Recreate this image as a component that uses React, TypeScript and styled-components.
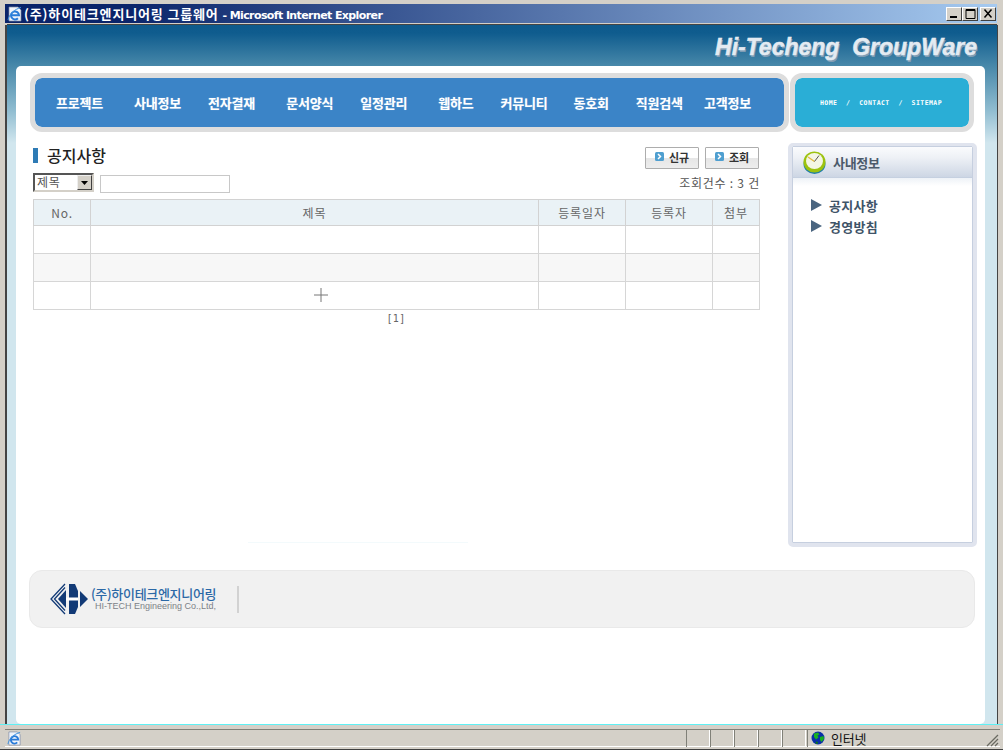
import React from "react";
import styled, { createGlobalStyle } from "styled-components";

const KR = `"Noto Sans CJK KR", "Liberation Sans", sans-serif`;

const Global = createGlobalStyle`
  html, body { margin: 0; padding: 0; background: #fff; }
  body { font-family: ${KR}; }
  * { box-sizing: border-box; }
`;

const Win = styled.div`
  width: 1003px;
  height: 752px;
  overflow: hidden;
  display: flex;
  flex-direction: column;
  background: #fff;
`;
const Chrome = styled.div`
  height: 750px;
  display: flex;
  flex-direction: column;
  background: #d4d0c8;
  border-bottom: 1px solid #404040;
`;
const TitleBar = styled.div`
  height: 19px;
  margin: 4px 6px 0 5px;
  flex: none;
  display: flex;
  align-items: center;
  padding-left: 2px;
  background: linear-gradient(90deg, #0a246a 0%, #0a246a 12%, #a6caf0 100%);
`;
const TitleText = styled.div`
  margin-left: 1px;
  color: #fff;
  font: 700 13px ${KR};
  letter-spacing: 0.85px;
  white-space: nowrap;
`;
const TitleLatin = styled.span`
  font: 700 11px "DejaVu Sans", "Liberation Sans", sans-serif;
  letter-spacing: -0.6px;
`;
const WinButtons = styled.div`
  margin-left: auto;
  margin-right: 1px;
  display: flex;
`;
const WinButton = styled.div<{ $gap?: number }>`
  width: 16px;
  height: 14px;
  margin-left: ${(p) => p.$gap ?? 0}px;
  background: #d4d0c8;
  border: 1px solid;
  border-color: #fff #404040 #404040 #fff;
  display: flex;
  align-items: center;
  justify-content: center;
`;
const Client = styled.div`
  height: 699px;
  flex: none;
  margin: 2px 6px 0 7px;
  box-shadow: -2px 0 0 #444, 1px 0 0 #444, 0 -1px 0 #444;
  padding: 41px 12px 0 9px;
  background: linear-gradient(
    180deg,
    #0e5a8c 0,
    #0f5c8e 8px,
    #4687a9 40px,
    #8fbcd0 85px,
    #d1e6ee 118px
  );
`;
const Card = styled.div`
  height: 658px;
  background: #fff;
  border-radius: 5px;
  padding: 7px 0 0 14px;
  position: relative;
`;
const Brand = styled.div`
  position: absolute;
  right: 8px;
  top: -32px;
  color: #e4ebf2;
  font: italic 700 23px "Liberation Sans", sans-serif;
  -webkit-text-stroke: 0.5px #e4ebf2;
  white-space: pre;
  text-shadow: 1px 2px 0 #7f9db5;
`;
const NavRow = styled.div`
  display: flex;
  gap: 1px;
  height: 59px;
`;
const NavFrame = styled.div<{ $w: number; $bg: string }>`
  width: ${(p) => p.$w}px;
  height: 59px;
  border: 5px solid #dddddd;
  border-radius: 12px;
  background: ${(p) => p.$bg};
  background-clip: padding-box;
  display: flex;
  align-items: center;
  justify-content: ${(p) => (p.$w < 300 ? "center" : "flex-start")};
  padding-left: ${(p) => (p.$w < 300 ? 0 : 21)}px;
`;
const NavItem = styled.div<{ $gap: number }>`
  margin-left: ${(p) => p.$gap}px;
  color: #fff;
  font: 700 13px ${KR};
  letter-spacing: -0.2px;
  white-space: nowrap;
  text-shadow: 0 0 1px rgba(255, 255, 255, 0.4);
`;
const SubNav = styled.div`
  color: #fff;
  font: 700 6.5px "DejaVu Sans Mono", monospace;
  letter-spacing: 0.45px;
  white-space: pre;
  margin-left: -2px;
`;
const Main = styled.div`
  display: flex;
  margin-top: 11px;
  height: 404px;
  padding-left: 3px;
`;
const Left = styled.div`
  width: 726px;
  flex: none;
  margin-right: 29px;
  display: flex;
  flex-direction: column;
`;
const HeadRow = styled.div`
  display: flex;
  align-items: center;
  height: 21px;
  margin-top: 4px;
`;
const Marker = styled.div`
  width: 5px;
  height: 15px;
  margin-top: -5px;
  background: #2e7bb5;
  margin-right: 9px;
`;
const PageTitle = styled.div`
  font: 500 16px ${KR};
  color: #222;
  white-space: nowrap;
  margin-top: -6px;
`;
const Buttons = styled.div`
  margin-left: auto;
  display: flex;
  gap: 6px;
`;
const Btn = styled.div`
  width: 54px;
  height: 22px;
  border: 1px solid #adadad;
  border-radius: 1px;
  background: linear-gradient(180deg, #fff 0, #fff 50%, #e6e6e6 51%, #ededed 100%);
  display: flex;
  align-items: center;
  justify-content: center;
  gap: 5px;
  color: #333;
  font: 700 11px ${KR};
  letter-spacing: -0.2px;
  padding-bottom: 2px;
`;
const FilterRow = styled.div`
  display: flex;
  align-items: flex-start;
  height: 26px;
  margin-top: 5px;
  position: relative;
`;
const FakeSelect = styled.div`
  width: 61px;
  height: 19px;
  border: 2px solid;
  border-color: #555 #d4d0c8 #d4d0c8 #555;
  background: #fff;
  display: flex;
  color: #555;
  font: 400 12px/13px ${KR};
  padding-left: 2px;
  letter-spacing: 0.7px;
`;
const SelectArrow = styled.div`
  margin-left: auto;
  width: 15px;
  height: 15px;
  background: #d4d0c8;
  border: 1px solid;
  border-color: #eee #404040 #404040 #eee;
  display: flex;
  align-items: center;
  justify-content: center;
`;
const Input = styled.div`
  width: 130px;
  height: 18px;
  margin: 2px 0 0 6px;
  border: 1px solid #c8c8c8;
  background: #fff;
`;
const Count = styled.div`
  margin-left: auto;
  margin-right: -1px;
  margin-top: 2px;
  color: #555;
  font: 400 12px/16px ${KR};
  white-space: nowrap;
  letter-spacing: 0.75px;
`;
const Table = styled.table`
  width: 726px;
  border-collapse: collapse;
  table-layout: fixed;
`;
const Th = styled.th<{ $w: number }>`
  width: ${(p) => p.$w}px;
  height: 26px;
  padding: 0;
  border: 1px solid #d2d2d2;
  background: #eaf2f6;
  color: #666;
  font: 400 12px ${KR};
  letter-spacing: 0.85px;
`;
const Td = styled.td<{ $alt?: boolean }>`
  height: 28px;
  padding: 0;
  border: 1px solid #d6d6d6;
  background: ${(p) => (p.$alt ? "#f7f7f7" : "#fff")};
`;
const CursorCell = styled(Td)`
  position: relative;
`;
const Cursor = styled.svg`
  position: absolute;
  left: 223px;
  top: 6px;
`;
const Paging = styled.div`
  text-align: center;
  color: #666;
  font: 400 10px/18px "DejaVu Sans Mono", monospace;
  letter-spacing: 0.3px;
`;
const Faint = styled.div`
  width: 220px;
  height: 1px;
  margin: auto 0 4px 215px;
  background: #f3fafc;
`;
const Panel = styled.div`
  width: 189px;
  height: 404px;
  flex: none;
  border: 4px solid #e0e4ee;
  border-top-width: 3px;
  border-radius: 5px;
  background: #fff;
  box-shadow: inset 0 0 0 1px #c6cfdf;
  display: flex;
  flex-direction: column;
`;
const PanelHead = styled.div`
  height: 31px;
  flex: none;
  margin: 1px 1px 0;
  border-bottom: 1px solid #c5d0e0;
  border-radius: 3px 3px 0 0;
  background: linear-gradient(180deg, #fafbfd 0, #eef1f6 35%, #cdd6e4 100%);
  display: flex;
  align-items: center;
  padding-left: 10px;
  gap: 7px;
`;
const PanelTitle = styled.div`
  color: #4b5a6b;
  font: 700 13px ${KR};
  letter-spacing: -0.3px;
`;
const PanelFade = styled.div`
  height: 8px;
  margin: 0 1px;
  flex: none;
  background: linear-gradient(180deg, #eef2f7 0, #fff 100%);
`;
const PanelList = styled.div`
  padding: 10px 0 0 19px;
  display: flex;
  flex-direction: column;
  gap: 3px;
`;
const PanelItem = styled.div`
  display: flex;
  align-items: center;
  gap: 7px;
  height: 18px;
  color: #3f5468;
  font: 700 13px ${KR};
  letter-spacing: 0.3px;
`;
const Tri = styled.svg`
  flex: none;
`;
const Footer = styled.div`
  margin: 23px 0 0 -1px;
  width: 946px;
  height: 58px;
  background: #f1f1f1;
  border: 1px solid #e9e9e9;
  border-radius: 13px;
  display: flex;
  align-items: center;
  padding-left: 20px;
`;
const Brandline = styled.div`
  display: flex;
  flex-direction: column;
  margin-left: 3px;
  margin-top: -1px;
`;
const CoName = styled.div`
  color: #2b68a6;
  font: 500 13px/15px ${KR};
  letter-spacing: -0.3px;
  white-space: nowrap;
`;
const CoSub = styled.div`
  color: #7d8288;
  font: 400 9px/11px "Liberation Sans", sans-serif;
  margin-left: 4px;
  white-space: nowrap;
`;
const FootDivider = styled.div`
  width: 2px;
  height: 27px;
  background: #d2d2d2;
  margin-left: 21px;
`;
const Cyan = styled.div`
  height: 1px;
  flex: none;
  background: #5ff0f4;
`;
const StatusBar = styled.div`
  flex: 1;
  margin: 0 3px 0 5px;
  padding-top: 4px;
  display: flex;
  flex-direction: column;
`;
const StatusInner = styled.div`
  height: 18px;
  border-top: 1px solid #808078;
  border-bottom: 1px solid #fff;
  display: flex;
  align-items: center;
  position: relative;
  padding-left: 2px;
`;
const StatusCell = styled.div`
  width: 24px;
  height: 17px;
  border-left: 1px solid #808078;
  border-right: 1px solid #fff;
`;
const StatusCells = styled.div`
  margin-left: auto;
  display: flex;
`;
const Zone = styled.div`
  width: 193px;
  height: 17px;
  margin-left: 1px;
  display: flex;
  align-items: center;
  gap: 6px;
  padding-left: 3px;
  border-left: 1px solid #808078;
  font: 400 13px ${KR};
  letter-spacing: -0.2px;
  color: #111;
  position: relative;
`;
const Grip = styled.svg`
  position: absolute;
  right: 1px;
  bottom: 0;
`;

const IE = ({ s = 16 }: { s?: number }) => (
  <svg width={s} height={s} viewBox="0 0 16 16">
    <path d="M2 1h9l3 3v11H2z" fill="#f0f4fb" stroke="#7a88a4" strokeWidth="0.7" />
    <path d="M4 9.200h8a4 4 0 1 0-1.100 3" fill="none" stroke="#2a7bd8" strokeWidth="2" />
    <path d="M1 14C2 8 8 3 14 1.500" fill="none" stroke="#3a90e0" strokeWidth="1" />
  </svg>
);
const Globe = () => (
  <svg width="14" height="14" viewBox="0 0 14 14">
    <circle cx="7" cy="7" r="6.500" fill="#0a2fa8" />
    <path d="M3 2.500 7 1.500l1.500 2-2 1 1 2-2.500 2-2-2.500zM9 6l3.500-1 .5 3-2.500 3-1.500-2z" fill="#18b020" />
    <path d="M5 10.500l2 .5-.5 2-2-.5z" fill="#0d7a18" />
  </svg>
);
const BtnIcon = () => (
  <svg width="9" height="9" viewBox="0 0 9 9">
    <rect width="9" height="9" rx="1.500" fill="#4f9fd0" />
    <path d="M3 2l2.500 2.500L3 7" stroke="#fff" strokeWidth="1.500" fill="none" />
  </svg>
);
const Clock = () => (
  <svg width="23" height="23" viewBox="0 0 23 23">
    <ellipse cx="11.500" cy="13" rx="11" ry="10" fill="#1f7ea8" />
    <ellipse cx="11.500" cy="11" rx="11" ry="10.500" fill="#9cc20e" />
    <ellipse cx="11.500" cy="10" rx="8.500" ry="8" fill="#f4f6e4" />
    <path d="M5 6l6.500 4.500" stroke="#e2b93a" strokeWidth="1.300" fill="none" />
    <path d="M11.500 10.500 16 4.500" stroke="#555" strokeWidth="1" fill="none" />
  </svg>
);
const Logo = () => (
  <svg width="38" height="32" viewBox="0 0 38 32">
    <g fill="none" stroke="#123a76" strokeWidth="1.300">
      <path d="M15 1 1 16l14 15" />
      <path d="M15 4.500 4.500 16 15 27.500" />
    </g>
    <path d="M8 16 16 7v18z" fill="#123a76" />
    <path d="M19 1h6l3 7v16l-3 7h-6z" fill="#123a76" />
    <rect x="16" y="14.500" width="12" height="3" fill="#fff" />
    <path d="M30 8l8 8-8 8z" fill="#123a76" />
  </svg>
);

const NAV: [string, number][] = [
  ["프로젝트", 0],
  ["사내정보", 31],
  ["전자결재", 27],
  ["문서양식", 31],
  ["일정관리", 27],
  ["웹하드", 31],
  ["커뮤니티", 27],
  ["동호회", 26],
  ["직원검색", 27],
  ["고객정보", 21],
];

export default function App() {
  return (
    <Win>
      <Global />
      <Chrome>
        <TitleBar>
          <IE />
          <TitleText>
            (주)하이테크엔지니어링 그룹웨어 <TitleLatin>- Microsoft Internet Explorer</TitleLatin>
          </TitleText>
          <WinButtons>
            <WinButton>
              <svg width="10" height="10" viewBox="0 0 10 10">
                <rect x="1" y="7" width="7" height="2" fill="#000" />
              </svg>
            </WinButton>
            <WinButton>
              <svg width="11" height="10" viewBox="0 0 11 10">
                <path d="M1 1.500h9M1 .5h9v9H1z" fill="none" stroke="#000" />
              </svg>
            </WinButton>
            <WinButton $gap={2}>
              <svg width="10" height="9" viewBox="0 0 10 9">
                <path d="M1.500 .5l7 8M8.500 .5l-7 8" stroke="#000" strokeWidth="1.500" />
              </svg>
            </WinButton>
          </WinButtons>
        </TitleBar>
        <Client>
          <Card>
            <Brand>{"Hi-Techeng  GroupWare"}</Brand>
            <NavRow>
              <NavFrame $w={759} $bg="#3b84c7">
                {NAV.map(([n, g]) => (
                  <NavItem key={n} $gap={g}>
                    {n}
                  </NavItem>
                ))}
              </NavFrame>
              <NavFrame $w={184} $bg="#2aaed6">
                <SubNav>{"HOME  /  CONTACT  /  SITEMAP"}</SubNav>
              </NavFrame>
            </NavRow>
            <Main>
              <Left>
                <HeadRow>
                  <Marker />
                  <PageTitle>공지사항</PageTitle>
                  <Buttons>
                    <Btn>
                      <BtnIcon />
                      신규
                    </Btn>
                    <Btn>
                      <BtnIcon />
                      조회
                    </Btn>
                  </Buttons>
                </HeadRow>
                <FilterRow>
                  <FakeSelect>
                    제목
                    <SelectArrow>
                      <svg width="7" height="4" viewBox="0 0 7 4">
                        <path d="M0 0h7L3.500 4z" fill="#000" />
                      </svg>
                    </SelectArrow>
                  </FakeSelect>
                  <Input />
                  <Count>조회건수 : 3 건</Count>
                </FilterRow>
                <Table>
                  <thead>
                    <tr>
                      <Th $w={57}>No.</Th>
                      <Th $w={448}>제목</Th>
                      <Th $w={87}>등록일자</Th>
                      <Th $w={87}>등록자</Th>
                      <Th $w={47}>첨부</Th>
                    </tr>
                  </thead>
                  <tbody>
                    {[0, 1, 2].map((r) => (
                      <tr key={r}>
                        <Td $alt={r === 1} />
                        {r === 2 ? (
                          <CursorCell>
                            <Cursor width="14" height="14" viewBox="0 0 14 14">
                              <path d="M7 0v14M0 7h14" stroke="#777" strokeWidth="1" />
                            </Cursor>
                          </CursorCell>
                        ) : (
                          <Td $alt={r === 1} />
                        )}
                        <Td $alt={r === 1} />
                        <Td $alt={r === 1} />
                        <Td $alt={r === 1} />
                      </tr>
                    ))}
                  </tbody>
                </Table>
                <Paging>[1]</Paging>
                <Faint />
              </Left>
              <Panel>
                <PanelHead>
                  <Clock />
                  <PanelTitle>사내정보</PanelTitle>
                </PanelHead>
                <PanelFade />
                <PanelList>
                  {["공지사항", "경영방침"].map((t) => (
                    <PanelItem key={t}>
                      <Tri width="11" height="12" viewBox="0 0 11 12">
                        <path d="M0 0l11 6-11 6z" fill="#4a6580" />
                      </Tri>
                      {t}
                    </PanelItem>
                  ))}
                </PanelList>
              </Panel>
            </Main>
            <Footer>
              <Logo />
              <Brandline>
                <CoName>(주)하이테크엔지니어링</CoName>
                <CoSub>HI-TECH Engineering Co.,Ltd,</CoSub>
              </Brandline>
              <FootDivider />
            </Footer>
          </Card>
        </Client>
        <Cyan />
        <StatusBar>
          <StatusInner>
            <IE s={15} />
            <StatusCells>
              <StatusCell />
              <StatusCell />
              <StatusCell />
              <StatusCell />
              <StatusCell />
            </StatusCells>
            <Zone>
              <Globe />
              인터넷
              <Grip width="14" height="14" viewBox="0 0 14 14">
                <path d="M13 2 2 13M13 6l-7 7M13 10l-3 3" stroke="#6a6a62" strokeWidth="1.300" />
              </Grip>
            </Zone>
          </StatusInner>
        </StatusBar>
      </Chrome>
    </Win>
  );
}
